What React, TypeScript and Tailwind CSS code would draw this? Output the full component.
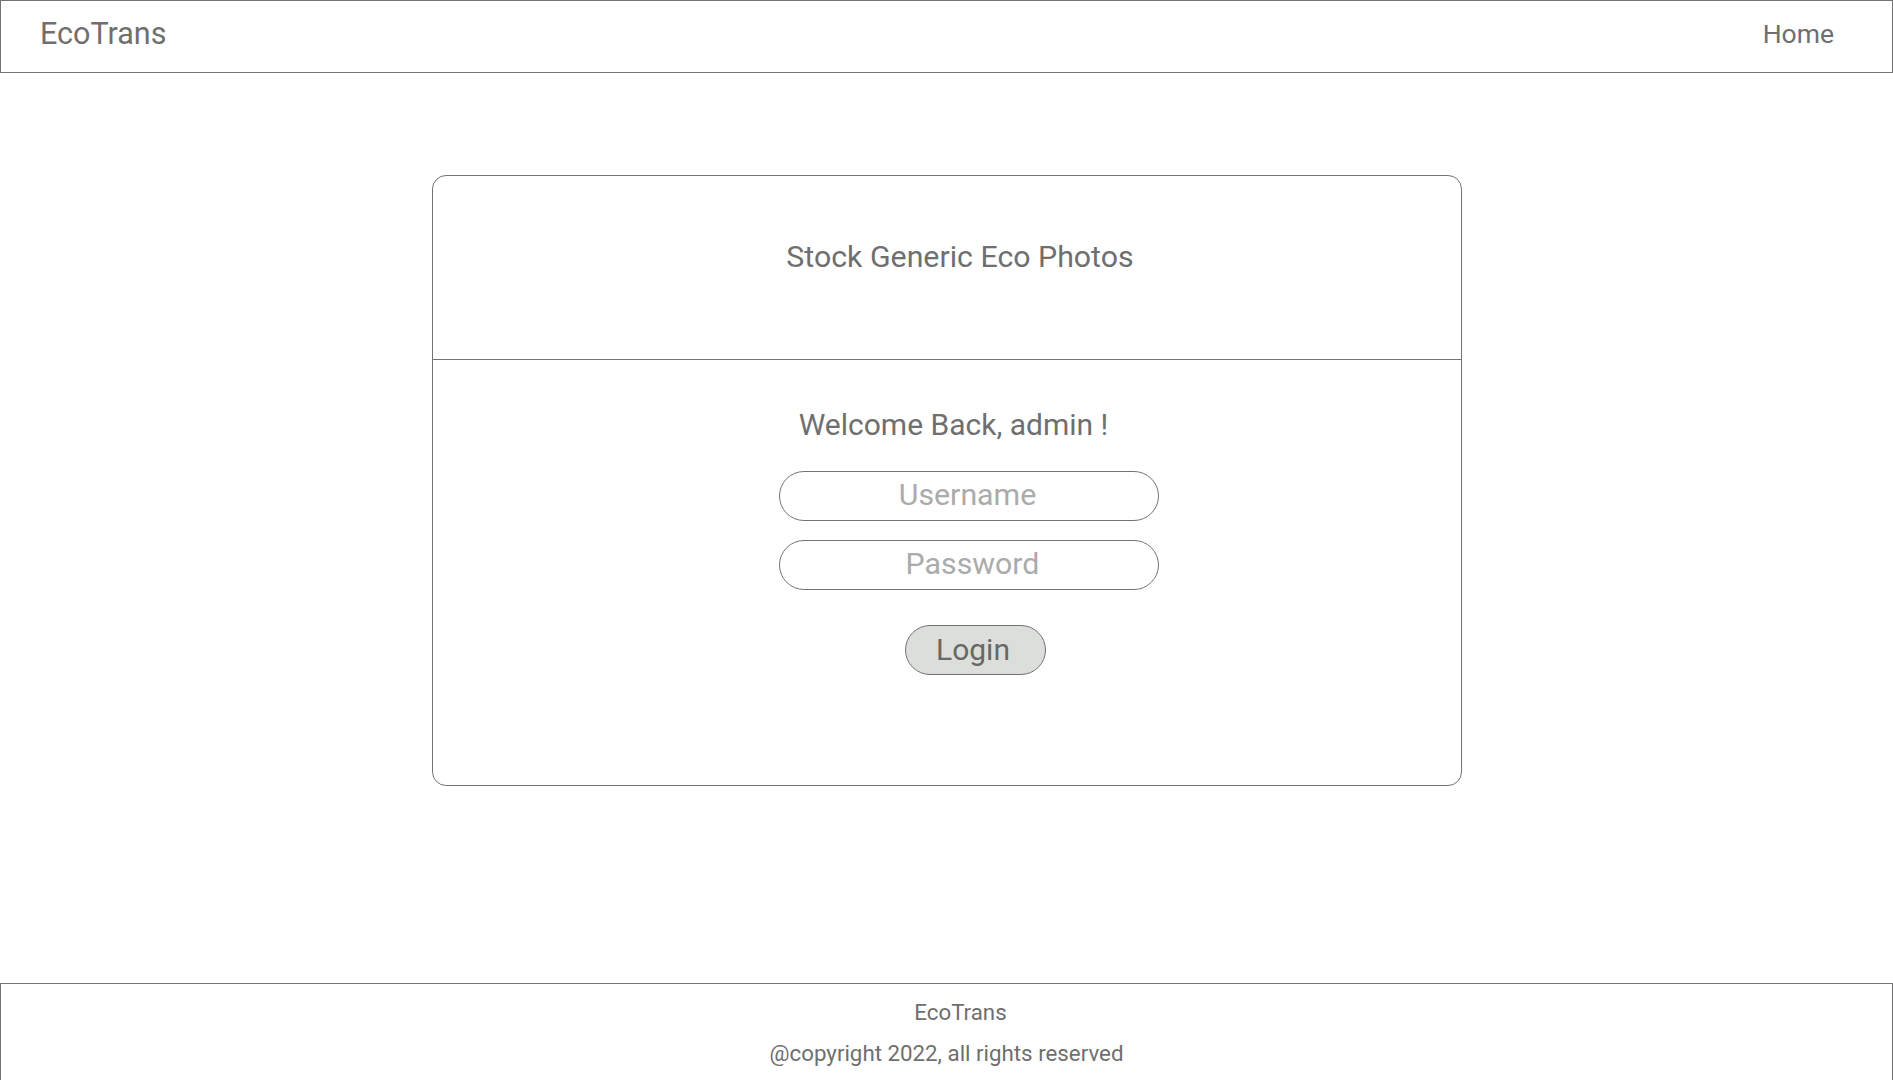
export default function App(): JSX.Element {
  return (
    <div className="min-h-screen bg-white font-['Roboto',sans-serif] text-[#6f6f6f]">
      <header className="flex h-[73px] items-start justify-between border border-[#737373] pl-[39px] pr-[58px] pt-[15px]">
        <span className="text-[30.5px] leading-[36px]">EcoTrans</span>
        <a href="#" className="text-[26.5px] leading-[36px]">
          Home
        </a>
      </header>

      <main className="mx-auto mt-[102px] w-[1030px] rounded-[14px] border border-[#737373]">
        <div className="flex h-[184px] flex-col items-center border-b border-[#737373] pt-[63px]">
          <h2 className="ml-[27px] text-[30.3px] leading-[36px]">Stock Generic Eco Photos</h2>
        </div>
        <div className="flex h-[425px] flex-col items-center pt-[47px]">
          <h1 className="ml-[14px] text-[30px] leading-[36px]">Welcome Back, admin !</h1>
          <input
            type="text"
            placeholder="Username"
            className="ml-[44px] mt-[28px] h-[50px] w-[380px] rounded-full border border-[#737373] pb-[4px] pr-[2px] text-center text-[30.3px] outline-none placeholder:text-[#ababab]"
          />
          <input
            type="password"
            placeholder="Password"
            className="ml-[44px] mt-[19px] h-[50px] w-[380px] rounded-full border border-[#737373] pb-[4px] pl-[8px] text-center text-[30.3px] outline-none placeholder:text-[#ababab]"
          />
          <button className="ml-[57px] mt-[35px] h-[50px] w-[141px] rounded-full border border-[#737373] bg-[#dcdedb] pr-[4px] text-[30px] leading-[36px] text-[#686868]">
            Login
          </button>
        </div>
      </main>

      <footer className="mt-[197px] flex h-[97px] flex-col items-center border-x border-t border-[#737373] pt-[14px] text-[22.3px] leading-[28px]">
        <span className="ml-[28px]">EcoTrans</span>
        <span className="mt-[13px]">@copyright 2022, all rights reserved</span>
      </footer>
    </div>
  );
}
